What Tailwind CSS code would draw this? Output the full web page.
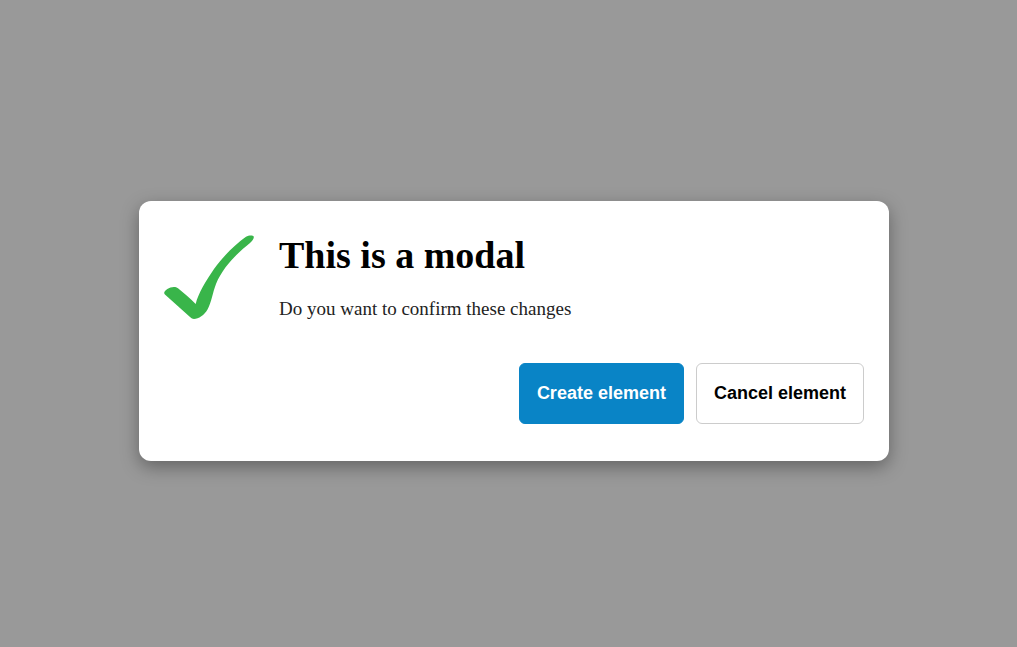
<!DOCTYPE html>
<html lang="en">
<head>
<meta charset="utf-8">
<meta name="viewport" content="width=device-width, initial-scale=1">
<title>This is a modal</title>
<script src="https://cdn.jsdelivr.net/npm/@tailwindcss/browser@4"></script>
</head>
<body class="bg-[#999999]">
<main class="flex min-h-screen items-center justify-center pt-[15px] pl-[11px]">
  <section role="dialog" aria-modal="true" aria-labelledby="title" aria-describedby="message" class="w-full max-w-[750px] rounded-xl bg-white px-[25px] pt-[32px] pb-[37px] shadow-[0_6px_18px_rgba(0,0,0,0.35)]">
    <div class="flex items-start gap-[25px] font-[Georgia,'Liberation_Serif',serif]">
      <svg class="mt-[2px] h-[85px] w-[90px] shrink-0" viewBox="0 0 90 85" fill="#39b54a" aria-hidden="true">
        <path d="M.2 58C.2 55.500 5.500 51.900 9.800 51.900C11.500 51.900 12.800 52.300 14 53.300C20 58 26 63.500 31.700 68.900C34 59 42 45.500 50 34C58.500 22 71 9.500 82 1.800C84.500 .4 88.700 0 89.700 1.500C90.300 3 88.500 5.700 86 8C74 17.500 59.500 31 52 49C48.500 58 47.500 67.500 43.500 74.500C40.500 80 34.500 84 30 84C28.600 84 27.300 83.200 26 82L1.200 59.700C.6 59.200.3 58.800.2 58Z"/>
      </svg>
      <div class="min-w-0 flex-1">
        <h1 id="title" class="text-[38px] leading-[44px] font-bold text-black">This is a modal</h1>
        <p id="message" class="mt-5 text-[19px] leading-6 text-[#222222]">Do you want to confirm these changes</p>
      </div>
    </div>
    <div class="mt-[42px] flex flex-wrap justify-end gap-3 font-['Liberation_Sans',Arial,sans-serif] text-[18px] leading-[21px] font-bold">
      <button type="button" class="rounded-md border border-[#0984c6] bg-[#0984c6] px-[17px] py-[19px] text-white">Create element</button>
      <button type="button" class="rounded-md border border-[#cccccc] bg-white px-[17px] py-[19px] text-black">Cancel element</button>
    </div>
  </section>
</main>
</body>
</html>
